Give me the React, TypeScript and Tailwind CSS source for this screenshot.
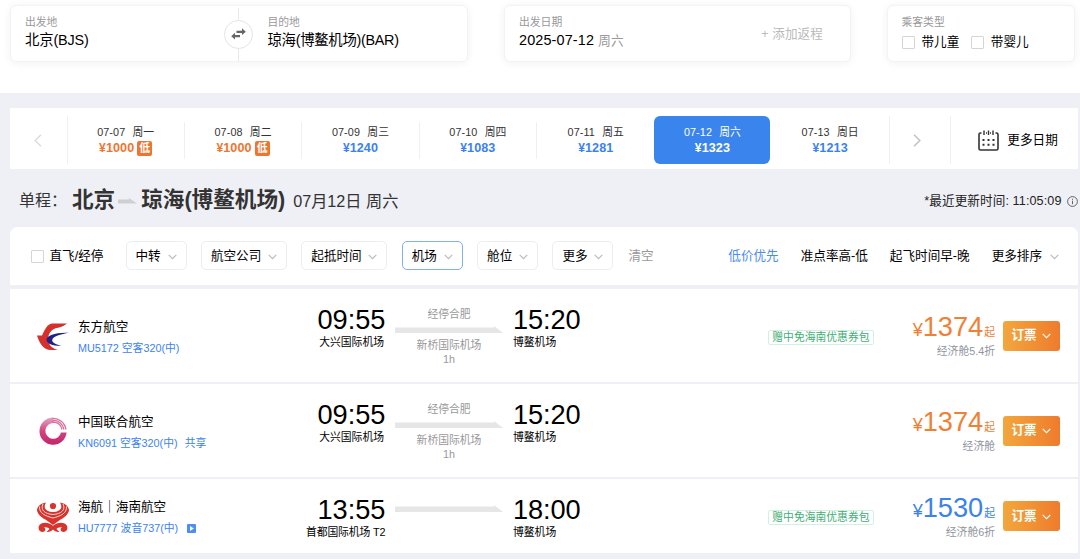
import type { ReactNode } from 'react'
import clsx from 'clsx'

interface DayPrice {
  date: string
  week: string
  price: number
  lowest?: boolean
  active?: boolean
}

interface Flight {
  id: string
  logo: ReactNode
  airline: string
  flightNo: string
  extra?: ReactNode
  depart: string
  departAirport: string
  arrive: string
  arriveAirport: string
  stop?: { city: string; airport: string; duration: string }
  tag?: string
  price: number
  priceClass: string
  cabin: string
}

const days: DayPrice[] = [
  { date: '07-07', week: '周一', price: 1000, lowest: true },
  { date: '07-08', week: '周二', price: 1000, lowest: true },
  { date: '07-09', week: '周三', price: 1240 },
  { date: '07-10', week: '周四', price: 1083 },
  { date: '07-11', week: '周五', price: 1281 },
  { date: '07-12', week: '周六', price: 1323, active: true },
  { date: '07-13', week: '周日', price: 1213 },
]

const filters = [
  { label: '中转', width: 'w-[61px]' },
  { label: '航空公司', width: 'w-[86px]' },
  { label: '起抵时间', width: 'w-[86px]' },
  { label: '机场', width: 'w-[61px]', active: true },
  { label: '舱位', width: 'w-[61px]' },
  { label: '更多', width: 'w-[61px]' },
]

const flights: Flight[] = [
  {
    id: 'MU5172',
    logo: <EasternLogo />,
    airline: '东方航空',
    flightNo: 'MU5172 空客320(中)',
    depart: '09:55',
    departAirport: '大兴国际机场',
    arrive: '15:20',
    arriveAirport: '博鳌机场',
    stop: { city: '经停合肥', airport: '新桥国际机场', duration: '1h' },
    tag: '赠中免海南优惠券包',
    price: 1374,
    priceClass: 'text-[#ee8135]',
    cabin: '经济舱5.4折',
  },
  {
    id: 'KN6091',
    logo: <UnitedLogo />,
    airline: '中国联合航空',
    flightNo: 'KN6091 空客320(中)',
    extra: <span className="ml-[7px]">共享</span>,
    depart: '09:55',
    departAirport: '大兴国际机场',
    arrive: '15:20',
    arriveAirport: '博鳌机场',
    stop: { city: '经停合肥', airport: '新桥国际机场', duration: '1h' },
    price: 1374,
    priceClass: 'text-[#ee8135]',
    cabin: '经济舱',
  },
  {
    id: 'HU7777',
    logo: <HainanLogo />,
    airline: '海航｜海南航空',
    flightNo: 'HU7777 波音737(中)',
    extra: <PlayIcon />,
    depart: '13:55',
    departAirport: '首都国际机场 T2',
    arrive: '18:00',
    arriveAirport: '博鳌机场',
    tag: '赠中免海南优惠券包',
    price: 1530,
    priceClass: 'text-[#3b82ee]',
    cabin: '经济舱6折',
  },
]

function EasternLogo() {
  return (
    <svg className="w-8 h-8" viewBox="0 0 32 32">
      <path d="M30 3.500H15C10.500 4 8 9 5 15.500L0 15.500C2 22 6 30 14 30H21C16 28.500 12 26 11 20.500 11 13.500 14 9 21 7.800 25 7 28 5 30 3.500Z" fill="#d5312a" />
      <path d="M32 12.800C20 12 9.500 15 9.500 19.800c0 4 7 6.500 15 6.200C19.500 24.500 15 23 15.200 20 15.500 16.500 24 14 32 12.800Z" fill="#1f2187" />
    </svg>
  )
}

function UnitedLogo() {
  return (
    <svg className="w-8 h-8" viewBox="0 0 32 32" fill="none">
      <defs>
        <linearGradient id="united" x1="0" y1="0" x2="0" y2="1">
          <stop offset="0" stopColor="#e3a3c2" />
          <stop offset="0.5" stopColor="#d0457f" />
          <stop offset="1" stopColor="#c4246c" />
        </linearGradient>
      </defs>
      <path d="M29.600 17.500A13.600 13.600 0 1 1 16 2.600L17 8A7.900 7.900 0 1 0 24 17.500Z" fill="url(#united)" />
      <path d="M15.500 3.400C22 3.100 27.800 7.500 29 14.500M15.500 5.300C21 5 25.700 8.500 27 14.500M15.500 7.200C20 6.900 23.700 9.500 25 14.500" stroke="#d5709f" strokeWidth="1.300" />
    </svg>
  )
}

function HainanLogo() {
  return (
    <svg className="w-8 h-8 mt-[2px]" viewBox="0 0 32 32">
      <path d="M9 1.500C3.500 2.500 0 5.500 0 9.500 .8 14 5.500 17 9.500 19.200L16 24l6.500-4.800C26.500 17 31.200 14 32 9.500 32 5.500 28.500 2.500 23 1.500 26 6 24 11 16 11S6 6 9 1.500Z" fill="#d9332c" />
      <g fill="none" stroke="#fff" strokeWidth="0.800">
        <path d="M6 3C3 9 8 13 16 13.500 24 13 29 9 26 3" />
        <path d="M2.500 5.500C2 12.500 8.500 15 16 17 23.500 15 30 12.500 29.500 5.500" />
      </g>
      <circle cx="16" cy="5" r="3.100" fill="#d9332c" />
      <path d="M16 24.800C12 21.300 5.500 20.500 2.500 24 .5 27 2 31 5.500 31c3 0 4-3.500 1.500-4.500 3-.5 4.500.5 5.500 1.500L9.500 31c3 .3 5-1 6.500-2.500 1.500 1.500 3.500 2.800 6.500 2.500L19.500 28c1-1 2.500-2 5.500-1.500C22.500 27.500 23.500 31 26.500 31c3.500 0 5-4 3-7C26.500 20.500 20 21.300 16 24.800Z" fill="#d9332c" />
    </svg>
  )
}

function PlayIcon() {
  return (
    <svg className="w-[9px] h-[9px] ml-[9px] mt-[1px]" viewBox="0 0 10 10">
      <rect width="10" height="10" rx="1" fill="#4c8df6" />
      <path d="M3.300 2.300 7.800 5 3.300 7.700Z" fill="#fff" />
    </svg>
  )
}

function Chevron({ className }: { className?: string }) {
  return (
    <svg className={clsx('w-[9px] h-[6px] shrink-0', className)} viewBox="0 0 9 6" fill="none">
      <path d="M.7.900 4.500 4.600 8.300.900" stroke="currentColor" strokeWidth="1.200" />
    </svg>
  )
}

function Checkbox() {
  return <span className="w-[13px] h-[13px] border border-[#d5d5d5] rounded-[1px] shrink-0" />
}

function Card({ className, children }: { className: string; children: ReactNode }) {
  return (
    <div className={clsx('h-[57px] rounded-md bg-white border border-[#f3f3f3] shadow-[0_1px_9px_rgba(0,0,0,0.06)]', className)}>
      {children}
    </div>
  )
}

function SearchBar() {
  return (
    <div className="flex h-[93px] pt-[5px] pl-[9.500px] bg-white">
      <Card className="w-[458px] flex pt-[9px]">
        <div className="w-[228px] pl-[14.500px]">
          <p className="text-[10.8px] leading-[14px] text-[#999]">出发地</p>
          <p className="text-[14.400px] leading-[23px] tracking-[-0.15px]">北京(BJS)</p>
        </div>
        <div className="w-0 -mt-[7px] flex flex-col items-center">
          <span className="w-px h-[12px] bg-[#e8e8e8]" />
          <span className="w-[29px] h-[29px] rounded-full border border-[#e4e4e4] flex items-center justify-center shrink-0">
            <svg className="w-[15px] h-[14px]" viewBox="0 0 15 14" fill="#666">
              <path d="M5.500 3.700H11V1.300L14.800 4.700 11 8.100V5.900H5.500ZM9 8.100v2.200H4v2.300L.2 9.200 4 5.800v2.300Z" />
            </svg>
          </span>
          <span className="w-px h-[13px] bg-[#e8e8e8]" />
        </div>
        <div className="pl-[29px]">
          <p className="text-[10.8px] leading-[14px] text-[#999]">目的地</p>
          <p className="text-[14.400px] leading-[23px] tracking-[-0.3px]">琼海(博鳌机场)(BAR)</p>
        </div>
      </Card>
      <Card className="ml-9 w-[347px] flex justify-between pt-[9px] pl-[14.500px] pr-[26.500px]">
        <div>
          <p className="text-[10.8px] leading-[14px] text-[#999]">出发日期</p>
          <p className="text-[14.4px] leading-[23px] tracking-[0.15px]">
            2025-07-12 <span className="text-[12.6px] text-[#999]">周六</span>
          </p>
        </div>
        <p className="text-[12.6px] leading-[39px] tracking-[0.1px] text-[#bbb]">+ 添加返程</p>
      </Card>
      <Card className="ml-9 w-[188px] pt-[9px] pl-[14px]">
        <p className="text-[10.8px] leading-[14px] text-[#999]">乘客类型</p>
        <div className="flex items-center h-[26px] text-[12.6px]">
          <Checkbox />
          <span className="ml-[7px] mr-[11.500px]">带儿童</span>
          <Checkbox />
          <span className="ml-[7px]">带婴儿</span>
        </div>
      </Card>
    </div>
  )
}

function DateBar() {
  return (
    <div className="flex items-center h-[61px] pt-[3px] bg-white">
      <div className="w-[57.500px] h-12 border-r border-[#f0f0f0] flex items-center justify-center">
        <svg className="w-2 h-[13px]" viewBox="0 0 8 13" fill="none">
          <path d="M7 .8 1.200 6.500 7 12.200" stroke="#dcdcdc" strokeWidth="1.400" />
        </svg>
      </div>
      {days.map((d, i) => (
        <div
          key={d.date}
          className={clsx(
            'flex flex-col items-center justify-center',
            d.active ? 'w-[116px] mr-[1px] h-12 rounded-md bg-[#3a85ed] text-white' : 'w-[117.4px] h-[37px] text-[#333]',
            i < 4 && 'border-r border-[#f0f0f0]'
          )}
        >
          <p className="text-[10.8px] leading-4 tracking-[0.1px] whitespace-pre">
            {d.date}{'  '}<span className="ml-[1px]">{d.week}</span>
          </p>
          <p
            className={clsx(
              'flex items-center text-[12.6px] leading-[17px] font-bold tracking-[0.1px]',
              d.active ? 'text-white' : d.lowest ? 'text-[#ee7530]' : 'text-[#3b82ee]'
            )}
          >
            <span className="text-[12px]">¥</span>{d.price}
            {d.lowest && (
              <span className="ml-[3px] w-[15px] h-[15px] rounded-[2px] bg-[#ee7530] text-white text-[10.8px] leading-[14px] text-center">低</span>
            )}
          </p>
        </div>
      ))}
      <div className="w-[62px] h-12 border-r border-l border-[#f0f0f0] flex items-center justify-center">
        <svg className="w-2 h-[13px] -ml-[6px]" viewBox="0 0 8 13" fill="none">
          <path d="M1 .8 6.800 6.500 1 12.200" stroke="#c4c4c4" strokeWidth="1.600" />
        </svg>
      </div>
      <svg className="w-[21px] h-[21px] ml-[27px]" viewBox="0 0 21 21" fill="none" stroke="#333">
        <path d="M3.500 3H2.500Q1 3 1 4.500V18.500Q1 20 2.500 20H18.500Q20 20 20 18.500V4.500Q20 3 18.500 3H17.500M8 3h1M12 3h1" strokeWidth="1.600" />
        <path d="M6 .5v4.500M10.500.5v4.500M15 .5v4.500" strokeWidth="1.400" />
        <path d="M4.500 10h2M9.500 10h2M14.500 10h2M4.500 14.800h2M9.500 14.800h2M14.500 14.800h2" strokeWidth="1.900" />
      </svg>
      <span className="ml-[8.500px] text-[12.6px]">更多日期</span>
    </div>
  )
}

function TitleRow() {
  return (
    <div className="flex items-center h-[58px] pt-[4px] pl-[9px] text-[#333]">
      <span className="mt-[2px] text-[16px]">单程：</span>
      <span className="ml-[5px] text-[21.600px] font-bold">北京</span>
      <svg className="w-[19px] h-[6px] ml-[3px] mt-[1px] mr-[4px]" viewBox="0 0 19 6">
        <path d="M0 1.500h11V0l8 5.500H0Z" fill="#cfcfcf" />
      </svg>
      <span className="text-[21.600px] font-bold">琼海(博鳌机场)</span>
      <span className="ml-[8px] mt-[2px] text-[16.200px]">07月12日 周六</span>
      <span className="ml-auto mt-[3px] text-[12.6px] tracking-[0.1px] text-[#222]">*最近更新时间: 11:05:09</span>
      <svg className="w-[11px] h-[11px] ml-[5px] mt-[3px]" viewBox="0 0 11 11" fill="none" stroke="#555">
        <circle cx="5.500" cy="5.500" r="4.900" strokeWidth="0.900" />
        <path d="M5.500 4.700v3.500M5.500 2.700v1.100" strokeWidth="0.900" />
      </svg>
    </div>
  )
}

function FilterBar() {
  return (
    <div className="flex items-center h-[58px] pl-[21px] pr-[18.500px] rounded-t-lg bg-white text-[12.6px]">
      <Checkbox />
      <span className="ml-[5.500px] w-[76px]">直飞/经停</span>
      <div className="flex gap-[14.400px] -mt-[1px]">
        {filters.map((f) => (
          <span
            key={f.label}
            className={clsx(
              'h-[29px] flex items-center justify-between pt-[1px] pl-[9px] pr-[9px] border rounded-[5px] whitespace-nowrap',
              f.width,
              f.active ? 'border-[#7fb0f7]' : 'border-[#ededed]'
            )}
          >
            {f.label}
            <Chevron className="text-[#bbb] mt-[1px]" />
          </span>
        ))}
      </div>
      <span className="ml-[15px] text-[#999]">清空</span>
      <div className="ml-auto flex items-center gap-[22px]">
        <span className="text-[#4a8cf7]">低价优先</span>
        <span>准点率高-低</span>
        <span>起飞时间早-晚</span>
        <span className="flex items-center">
          更多排序
          <Chevron className="ml-[8px] mt-[2px] text-[#bbb]" />
        </span>
      </div>
    </div>
  )
}

function FlightRow({ flight }: { flight: Flight }) {
  const { stop } = flight
  return (
    <div className={clsx('flex bg-white', stop ? 'h-[93px]' : 'h-[74px]')}>
      <div className="flex items-center w-[260px] pl-[27px]">
        {flight.logo}
        <div className={clsx('ml-[9px]', stop ? 'pt-[5px]' : 'pt-[3px]')}>
          <p className="text-[12.6px] leading-[21px]">{flight.airline}</p>
          <p className="flex items-center text-[10.8px] leading-[21px] text-[#3b82f6]">
            {flight.flightNo}
            {flight.extra}
          </p>
        </div>
      </div>
      <div className="w-[115.500px] pt-[15px] text-right">
        <p className="text-[27.200px] leading-[32px]">{flight.depart}</p>
        <p className={clsx('text-[10.8px] leading-[13px]', stop ? 'pr-[1.500px]' : 'tracking-[-0.1px]')}>{flight.departAirport}</p>
      </div>
      <div className={clsx('w-[108px] ml-[9.500px] text-center text-[10.8px] text-[#999]', stop ? 'pt-[18px]' : 'pt-[26px]')}>
        {stop && <p className="mb-[5px] leading-[14px]">{stop.city}</p>}
        <svg className="w-[108px] h-[7px]" viewBox="0 0 108 7">
          <path d="M0 1.500h99V0l9 7H0Z" fill="#e6e6e6" />
        </svg>
        {stop && (
          <>
            <p className="mt-[5px] leading-[14px]">{stop.airport}</p>
            <p className="leading-[14px]">{stop.duration}</p>
          </>
        )}
      </div>
      <div className="w-[120px] ml-[10px] pt-[15px]">
        <p className="text-[27.200px] leading-[32px] tracking-[-0.1px]">{flight.arrive}</p>
        <p className="text-[10.8px] leading-[13px]">{flight.arriveAirport}</p>
      </div>
      <div className="ml-auto flex items-center">
        {flight.tag && (
          <span className="mt-[3px] h-[15px] px-[3.500px] border border-[#d3f0e2] rounded-[2px] text-[10.8px] leading-[13px] text-[#3fae74]">
            {flight.tag}
          </span>
        )}
        <div className="w-[121px] text-right">
          <p className={clsx('leading-[28px] whitespace-nowrap', flight.priceClass)}>
            <span className="text-[18px]">¥</span>
            <span className="text-[27.200px]">{flight.price}</span>
            <span className="ml-[1px] text-[10.8px]">起</span>
          </p>
          <p className="-mt-[2px] text-[10.8px] leading-[14px] text-[#8f959e]">{flight.cabin}</p>
        </div>
        <button className="ml-[7.500px] mr-[18px] w-[57px] h-[30px] flex items-center justify-center rounded-[3px] bg-linear-to-r from-[#f2a73d] to-[#ee7b2d] text-white text-[12.6px] font-bold">
          订票
          <Chevron className="ml-[5px] mt-px" />
        </button>
      </div>
    </div>
  )
}

export default function App() {
  return (
    <div
      className="w-[1080px] h-[559px] overflow-hidden bg-[#eff0f5] text-black"
      style={{ fontFamily: '"Liberation Sans", "Noto Sans CJK SC", sans-serif' }}
    >
      <SearchBar />
      <div className="pt-[15px] pl-[10px] w-[1077.500px]">
        <DateBar />
        <TitleRow />
        <FilterBar />
        <div className="mt-[4px] flex flex-col gap-[2px]">
          {flights.map((f) => (
            <FlightRow key={f.id} flight={f} />
          ))}
        </div>
      </div>
    </div>
  )
}
